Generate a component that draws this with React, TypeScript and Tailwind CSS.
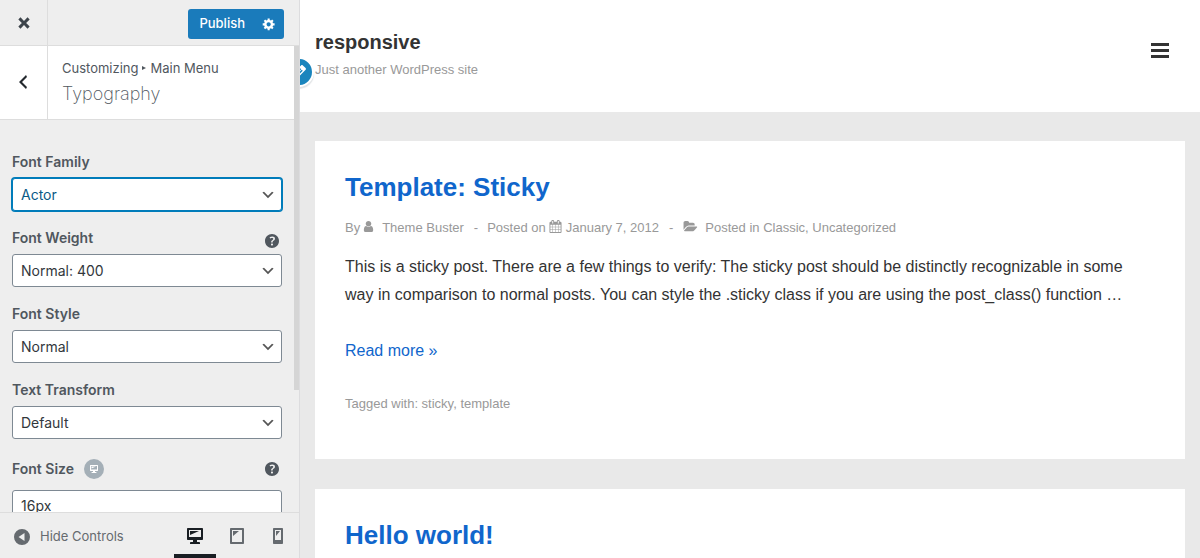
import type { ReactNode } from "react";

const icons = {
  close: "M12.12 10l3.53 3.53-2.12 2.12L10 12.12l-3.54 3.54-2.12-2.12L7.88 10 4.34 6.46l2.12-2.12L10 7.88l3.54-3.53 2.12 2.12z",
  back: "M14 5l-5 5 5 5-1 2-7-7 7-7z",
  gear: "M18 12h-2.18c-.17.7-.44 1.35-.81 1.93l1.54 1.54-2.1 2.1-1.54-1.54c-.58.36-1.23.63-1.91.79V19H8v-2.18c-.68-.16-1.33-.43-1.91-.79l-1.54 1.54-2.12-2.12 1.54-1.54c-.36-.58-.63-1.23-.79-1.91H1V9.03h2.17c.16-.7.44-1.35.8-1.94L2.43 5.55l2.1-2.1 1.54 1.54c.58-.37 1.24-.64 1.93-.81V2h3v2.18c.68.16 1.33.43 1.91.79l1.54-1.54 2.12 2.12-1.54 1.54c.36.59.64 1.24.8 1.94H18V12zm-8.5 1.5c1.66 0 3-1.34 3-3s-1.34-3-3-3-3 1.34-3 3 1.34 3 3 3z",
  chevron: "M5 6l5 5 5-5 2 1-7 7-7-7 2-1z",
  help: "M17 10c0-3.87-3.14-7-7-7-3.87 0-7 3.13-7 7s3.13 7 7 7c3.86 0 7-3.13 7-7zm-6.3 1.48H9.14v-.43c0-.38.08-.7.24-.98s.46-.57.88-.89c.41-.29.68-.53.81-.71.14-.18.2-.39.2-.62 0-.25-.09-.44-.28-.58-.19-.13-.45-.19-.79-.19-.58 0-1.25.15-2 .46l-.64-1.28c.87-.49 1.8-.74 2.77-.74.81 0 1.45.2 1.92.58.48.39.71.91.71 1.55 0 .43-.09.8-.29 1.11-.19.32-.57.67-1.11 1.06-.38.28-.61.49-.71.63-.1.15-.15.34-.15.57v.35zm-1.47 2.74c-.18-.17-.27-.42-.27-.73 0-.33.08-.58.26-.75s.43-.25.77-.25c.32 0 .57.09.75.26s.27.42.27.74c0 .3-.09.55-.27.72-.18.18-.43.27-.75.27-.33 0-.58-.09-.76-.26z",
  collapse: "M10 2a8 8 0 1 0 0 16a8 8 0 1 0 0-16zM12.5 6v8L6.5 10z",
  desktop: "M3 2h14c.55 0 1 .45 1 1v10c0 .55-.45 1-1 1h-5v2h2c.55 0 1 .45 1 1v1H5v-1c0-.55.45-1 1-1h2v-2H3c-.55 0-1-.45-1-1V3c0-.55.45-1 1-1zm13 9V4H4v7h12zM5 5h9L5 9V5z",
  tablet: "M4 2h12c.55 0 1 .45 1 1v14c0 .55-.45 1-1 1H4c-.55 0-1-.45-1-1V3c0-.55.45-1 1-1zm11 14V4H5v12h10zM6 5h6l-6 5V5z",
  phone: "M6 2h8c.55 0 1 .45 1 1v14c0 .55-.45 1-1 1H6c-.55 0-1-.45-1-1V3c0-.55.45-1 1-1zm7 12V4H7v10h6zM8 5h4l-4 5V5z",
  edit: "M13.89 3.39l2.71 2.72c.46.46.42 1.24.03 1.64l-8.01 8.02-5.56 1.16 1.16-5.58s7.6-7.63 7.99-8.03c.39-.39 1.22-.39 1.68.07zm-2.73 2.79l-5.59 5.61 1.11 1.11 5.54-5.65zm-2.97 8.23l5.58-5.6-1.07-1.08-5.59 5.6z",
  user: "M1536 1399q0 109-62.5 187t-150.5 78h-854q-88 0-150.5-78t-62.5-187q0-85 8.5-160.5t31.5-152 58.5-131 94-89 134.5-34.5q131 128 313 128t313-128q76 0 134.5 34.5t94 89 58.5 131 31.5 152 8.5 160.5zm-256-887q0 159-112.5 271.5t-271.5 112.5-271.5-112.5-112.5-271.5 112.5-271.5 271.5-112.5 271.5 112.5 112.5 271.5z",
  calendar: "M192 1664h288v-288h-288v288zm352 0h320v-288h-320v288zm-352-352h288v-320h-288v320zm352 0h320v-320h-320v320zm-352-384h288v-288h-288v288zm736 736h320v-288h-320v288zm-384-736h320v-288h-320v288zm768 736h288v-288h-288v288zm-384-352h320v-320h-320v320zm-352-864v-288q0-13-9.5-22.5t-22.5-9.5h-64q-13 0-22.5 9.5t-9.5 22.5v288q0 13 9.5 22.5t22.5 9.5h64q13 0 22.5-9.5t9.5-22.5zm736 864h288v-320h-288v320zm-384-384h320v-288h-320v288zm384 0h288v-288h-288v288zm32-480v-288q0-13-9.5-22.5t-22.5-9.5h-64q-13 0-22.5 9.5t-9.5 22.5v288q0 13 9.5 22.5t22.5 9.5h64q13 0 22.5-9.5t9.5-22.5zm384-64v1280q0 52-38 90t-90 38h-1408q-52 0-90-38t-38-90v-1280q0-52 38-90t90-38h128v-96q0-66 47-113t113-47h64q66 0 113 47t47 113v96h384v-96q0-66 47-113t113-47h64q66 0 113 47t47 113v96h128q52 0 90 38t38 90z",
  folder: "M1943 952q0 31-31 66l-336 396q-43 51-120.5 86.5t-143.5 35.5h-1088q-34 0-60.5-13t-26.5-43q0-31 31-66l336-396q43-51 120.5-86.5t143.5-35.5h1088q34 0 60.5 13t26.5 43zm-343-344v160h-832q-94 0-197 47.5t-164 119.5l-337 396-5 6q0-4-.5-12.5t-.5-12.5v-960q0-92 66-158t158-66h320q92 0 158 66t66 158v32h544q92 0 158 66t66 158z",
};

type IconProps = { name: keyof typeof icons; className?: string; viewBox?: string };

function Icon({ name, className = "size-5", viewBox = "0 0 20 20" }: IconProps) {
  return (
    <svg viewBox={viewBox} className={`shrink-0 ${className}`} fill="currentColor" fillRule="evenodd" aria-hidden="true">
      <path d={icons[name]} />
    </svg>
  );
}

function HelpButton({ label }: { label: string }) {
  return (
    <button type="button" aria-label={label} className="ml-auto text-[#50575e]">
      <Icon name="help" />
    </button>
  );
}

type SelectFieldProps = { id: string; label: string; options: string[]; focused?: boolean; help?: ReactNode };

function SelectField({ id, label, options, focused, help }: SelectFieldProps) {
  return (
    <div>
      <div className="mb-1 flex h-6 items-start">
        <label htmlFor={id} className="text-sm leading-6 font-semibold">{label}</label>
        {help && <div className="ml-auto pt-[5px]">{help}</div>}
      </div>
      <div className="relative">
        <select
          id={id}
          className={`block h-[33px] w-full appearance-none rounded-[3px] border bg-white pr-6 pl-2 text-sm outline-none ${
            focused ? "border-[#007cba] text-[#0a5a86] ring-1 ring-[#007cba]" : "border-[#7e8993] text-[#32373c]"
          }`}
        >
          {options.map((o) => <option key={o}>{o}</option>)}
        </select>
        <Icon name="chevron" className="pointer-events-none absolute top-[9px] right-[6px] size-4 text-[#555]" />
      </div>
    </div>
  );
}

function Sidebar() {
  return (
    <aside className="flex w-[300px] shrink-0 flex-col border-r border-[#dcdcde] bg-[#eee] font-[Inter,sans-serif] text-[#50575e]">
      <header className="flex h-[46px] shrink-0 items-center border-b border-[#ddd] pr-[15px]">
        <button type="button" aria-label="Close" className="flex h-full w-12 items-center justify-center border-r border-[#ddd] text-[#3c434a]">
          <Icon name="close" />
        </button>
        <div className="mt-[3px] ml-auto flex h-[30px] rounded-[3px] bg-[#1a7bbb] text-white">
          <button type="button" className="pr-[9px] pl-[11px] text-[13px] font-medium">Publish</button>
          <button type="button" aria-label="Publish settings" className="flex w-[30px] items-center justify-center">
            <Icon name="gear" className="size-[14px]" />
          </button>
        </div>
      </header>

      <div className="flex min-h-0 flex-1 overflow-hidden">
        <div className="min-w-0 flex-1">
          <div className="flex h-[74px] border-b border-[#ddd] bg-white">
            <button type="button" aria-label="Back" className="flex w-12 items-center justify-center border-r border-[#ddd] pr-[2px] pb-[2px] text-[#23282d]">
              <Icon name="back" />
            </button>
            <div className="pt-3 pl-[14px]">
              <p className="flex items-center text-[13px] leading-5">
                Customizing
                <svg viewBox="0 0 4 4" className="mx-1 size-1" fill="currentColor" aria-hidden="true"><path d="M0 0l4 2-4 2z" /></svg>
                Main Menu
              </p>
              <h1 className="text-lg leading-8 font-extralight">Typography</h1>
            </div>
          </div>

          <form className="flex flex-col gap-[15px] px-3 pt-[30px]">
            <SelectField id="family" label="Font Family" options={["Actor"]} focused />
            <SelectField id="weight" label="Font Weight" options={["Normal: 400"]} help={<HelpButton label="Font weight help" />} />
            <SelectField id="style" label="Font Style" options={["Normal"]} />
            <SelectField id="transform" label="Text Transform" options={["Default"]} />
            <div>
              <div className="mb-[6px] flex h-[30px] items-center">
                <label htmlFor="size" className="text-sm leading-6 font-semibold">Font Size</label>
                <button type="button" aria-label="Desktop size" className="ml-[10px] flex size-5 items-center justify-center rounded-full bg-[#a4afb7] text-white">
                  <Icon name="desktop" className="size-[10px]" />
                </button>
                <HelpButton label="Font size help" />
              </div>
              <input id="size" type="text" defaultValue="16px" className="block h-[30px] w-full rounded-[3px] border border-[#7e8993] bg-white px-2 text-sm text-[#32373c]" />
            </div>
          </form>
        </div>
        <div className="h-[344px] w-[5px] shrink-0 bg-[#d5d5d5]" />
      </div>

      <footer className="flex h-[46px] shrink-0 items-stretch border-t border-[#ddd] pl-3">
        <button type="button" className="flex items-center gap-2 pt-[2px] text-[13px] text-[#656a6f]">
          <Icon name="collapse" />
          Hide Controls
        </button>
        <div className="ml-auto flex pr-px">
          <button type="button" aria-label="Desktop" className="flex w-[42px] items-center justify-center border-b-4 border-[#191e23] pt-1 text-[#191e23]">
            <Icon name="desktop" />
          </button>
          <button type="button" aria-label="Tablet" className="flex w-[41px] items-center justify-center text-[#656a6f]">
            <Icon name="tablet" />
          </button>
          <button type="button" aria-label="Mobile" className="flex w-[41px] items-center justify-center text-[#656a6f]">
            <Icon name="phone" />
          </button>
        </div>
      </footer>
    </aside>
  );
}

function Post({ title, children }: { title: string; children?: ReactNode }) {
  return (
    <article className="bg-white px-[30px] pt-[30px] pb-11">
      <h2 className="text-[26px] leading-8 font-bold text-[#1066cc]"><a href="#post">{title}</a></h2>
      {children}
    </article>
  );
}

function Preview() {
  return (
    <div className="relative min-w-0 flex-1 overflow-hidden bg-[#e9e9e9] font-['Liberation_Sans',Arial,sans-serif] text-[#333]">
      <header className="flex h-28 items-center justify-between bg-white px-[15px]">
        <div className="pb-1">
          <p className="text-xl leading-7 font-bold"><a href="#home">responsive</a></p>
          <p className="mt-1 text-[13px] leading-5 text-[#999]">Just another WordPress site</p>
        </div>
        <button type="button" aria-label="Menu" className="mr-4 mb-3 flex w-[18px] flex-col gap-[3px]">
          <span className="h-[3px] bg-[#333]" />
          <span className="h-[3px] bg-[#333]" />
          <span className="h-[3px] bg-[#333]" />
        </button>
      </header>
      <button type="button" aria-label="Edit site title" className="absolute top-[57px] -left-4 flex size-[30px] items-center justify-center rounded-full border-2 border-white bg-[#1a85bd] text-white shadow-[0_2px_1px_rgba(46,68,83,0.15)]">
        <Icon name="edit" />
      </button>

      <main className="flex flex-col gap-[30px] px-[15px] pt-[29px]">
        <Post title="Template: Sticky">
          <div className="mt-[15px] flex items-center text-[13px] leading-5 text-[#999]">
            By
            <Icon name="user" viewBox="0 0 1792 1792" className="mr-[7px] mb-[3px] ml-[2px] size-[13px]" />
            <a href="#author">Theme Buster</a>
            <span className="mr-[9px] ml-[10px]">-</span>
            Posted on
            <Icon name="calendar" viewBox="0 0 1792 1792" className="mr-1 mb-[3px] ml-[3px] size-[13px]" />
            <a href="#date">January 7, 2012</a>
            <span className="mx-[10px]">-</span>
            <Icon name="folder" viewBox="0 0 2048 1792" className="mr-[7px] mb-[3px] h-[13px] w-[15px]" />
            Posted in&nbsp;<a href="#classic">Classic</a>,&nbsp;<a href="#uncategorized">Uncategorized</a>
          </div>
          <p className="mt-[15px] text-base leading-7">
            This is a sticky post. There are a few things to verify: The sticky post should be distinctly recognizable in some
            way in comparison to normal posts. You can style the .sticky class if you are using the post_class() function …
          </p>
          <p className="mt-7 text-base leading-7 text-[#1066cc]"><a href="#more">Read more »</a></p>
          <p className="mt-7 text-[13px] leading-[22px] text-[#999]">
            Tagged with: <a href="#sticky">sticky</a>, <a href="#template">template</a>
          </p>
        </Post>
        <Post title="Hello world!" />
      </main>
    </div>
  );
}

export default function App() {
  return (
    <div className="flex h-screen overflow-hidden">
      <Sidebar />
      <Preview />
    </div>
  );
}
